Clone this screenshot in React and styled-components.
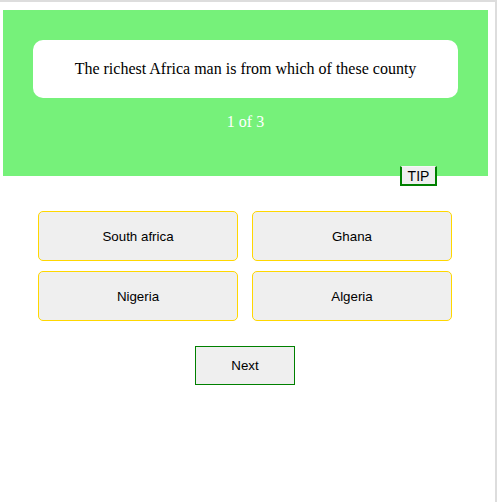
import React from "react";
import styled, { createGlobalStyle } from "styled-components";

const Global = createGlobalStyle`
  html, body { margin: 0; padding: 0; background: #fff; }
  body { font-family: "Liberation Serif", "Times New Roman", serif; }
`;

const Frame = styled.div`
  position: relative;
  box-sizing: border-box;
  width: 497px;
  height: 502px;
  border-top: 2px solid #dddddd;
  border-right: 2px solid #dddddd;
  padding: 8px 7px 0 3px;
`;

const Banner = styled.section`
  background: #76f17a;
  height: 166px;
  box-sizing: border-box;
  padding: 30px 30px 0;
  display: flex;
  flex-direction: column;
  align-items: stretch;
`;

const QuestionCard = styled.div`
  background: #fff;
  border-radius: 10px;
  height: 58px;
  display: flex;
  align-items: center;
  justify-content: center;
  font-size: 16px;
  color: #000;
`;

const Counter = styled.div`
  margin-top: 15px;
  text-align: center;
  color: #fff;
  font-size: 16px;
  line-height: 18px;
`;

const BaseButton = styled.button`
  box-sizing: border-box;
  background: #efefef;
  font-family: "Liberation Sans", Arial, sans-serif;
  font-size: 13.33px;
  color: #000;
  padding: 0;
  cursor: pointer;
`;

const TipButton = styled(BaseButton)`
  position: absolute;
  left: 400px;
  top: 164px;
  width: 37px;
  height: 20px;
  border: 2px solid #008000;
  border-top: 1px solid #f6f6f6;
  padding-top: 1px;
  font-size: 14px;
`;

const Options = styled.div`
  margin: 35px 0 0 35px;
  width: 414px;
  display: grid;
  grid-template-columns: 200px 200px;
  grid-auto-rows: 50px;
  column-gap: 14px;
  row-gap: 10px;
`;

const Option = styled(BaseButton)`
  border: 1px solid #ffd700;
  border-radius: 5px;
`;

const Footer = styled.div`
  margin-top: 25px;
  width: 414px;
  margin-left: 35px;
  display: flex;
  justify-content: center;
`;

const NextButton = styled(BaseButton)`
  width: 100px;
  height: 39px;
  border: 1px solid #008000;
`;

const options = ["South africa", "Ghana", "Nigeria", "Algeria"];

export default function App() {
  return (
    <>
      <Global />
      <Frame>
        <Banner>
          <QuestionCard>The richest Africa man is from which of these county</QuestionCard>
          <Counter>1 of 3</Counter>
        </Banner>
        <TipButton>TIP</TipButton>
        <Options>
          {options.map((o) => (
            <Option key={o}>{o}</Option>
          ))}
        </Options>
        <Footer>
          <NextButton>Next</NextButton>
        </Footer>
      </Frame>
    </>
  );
}
